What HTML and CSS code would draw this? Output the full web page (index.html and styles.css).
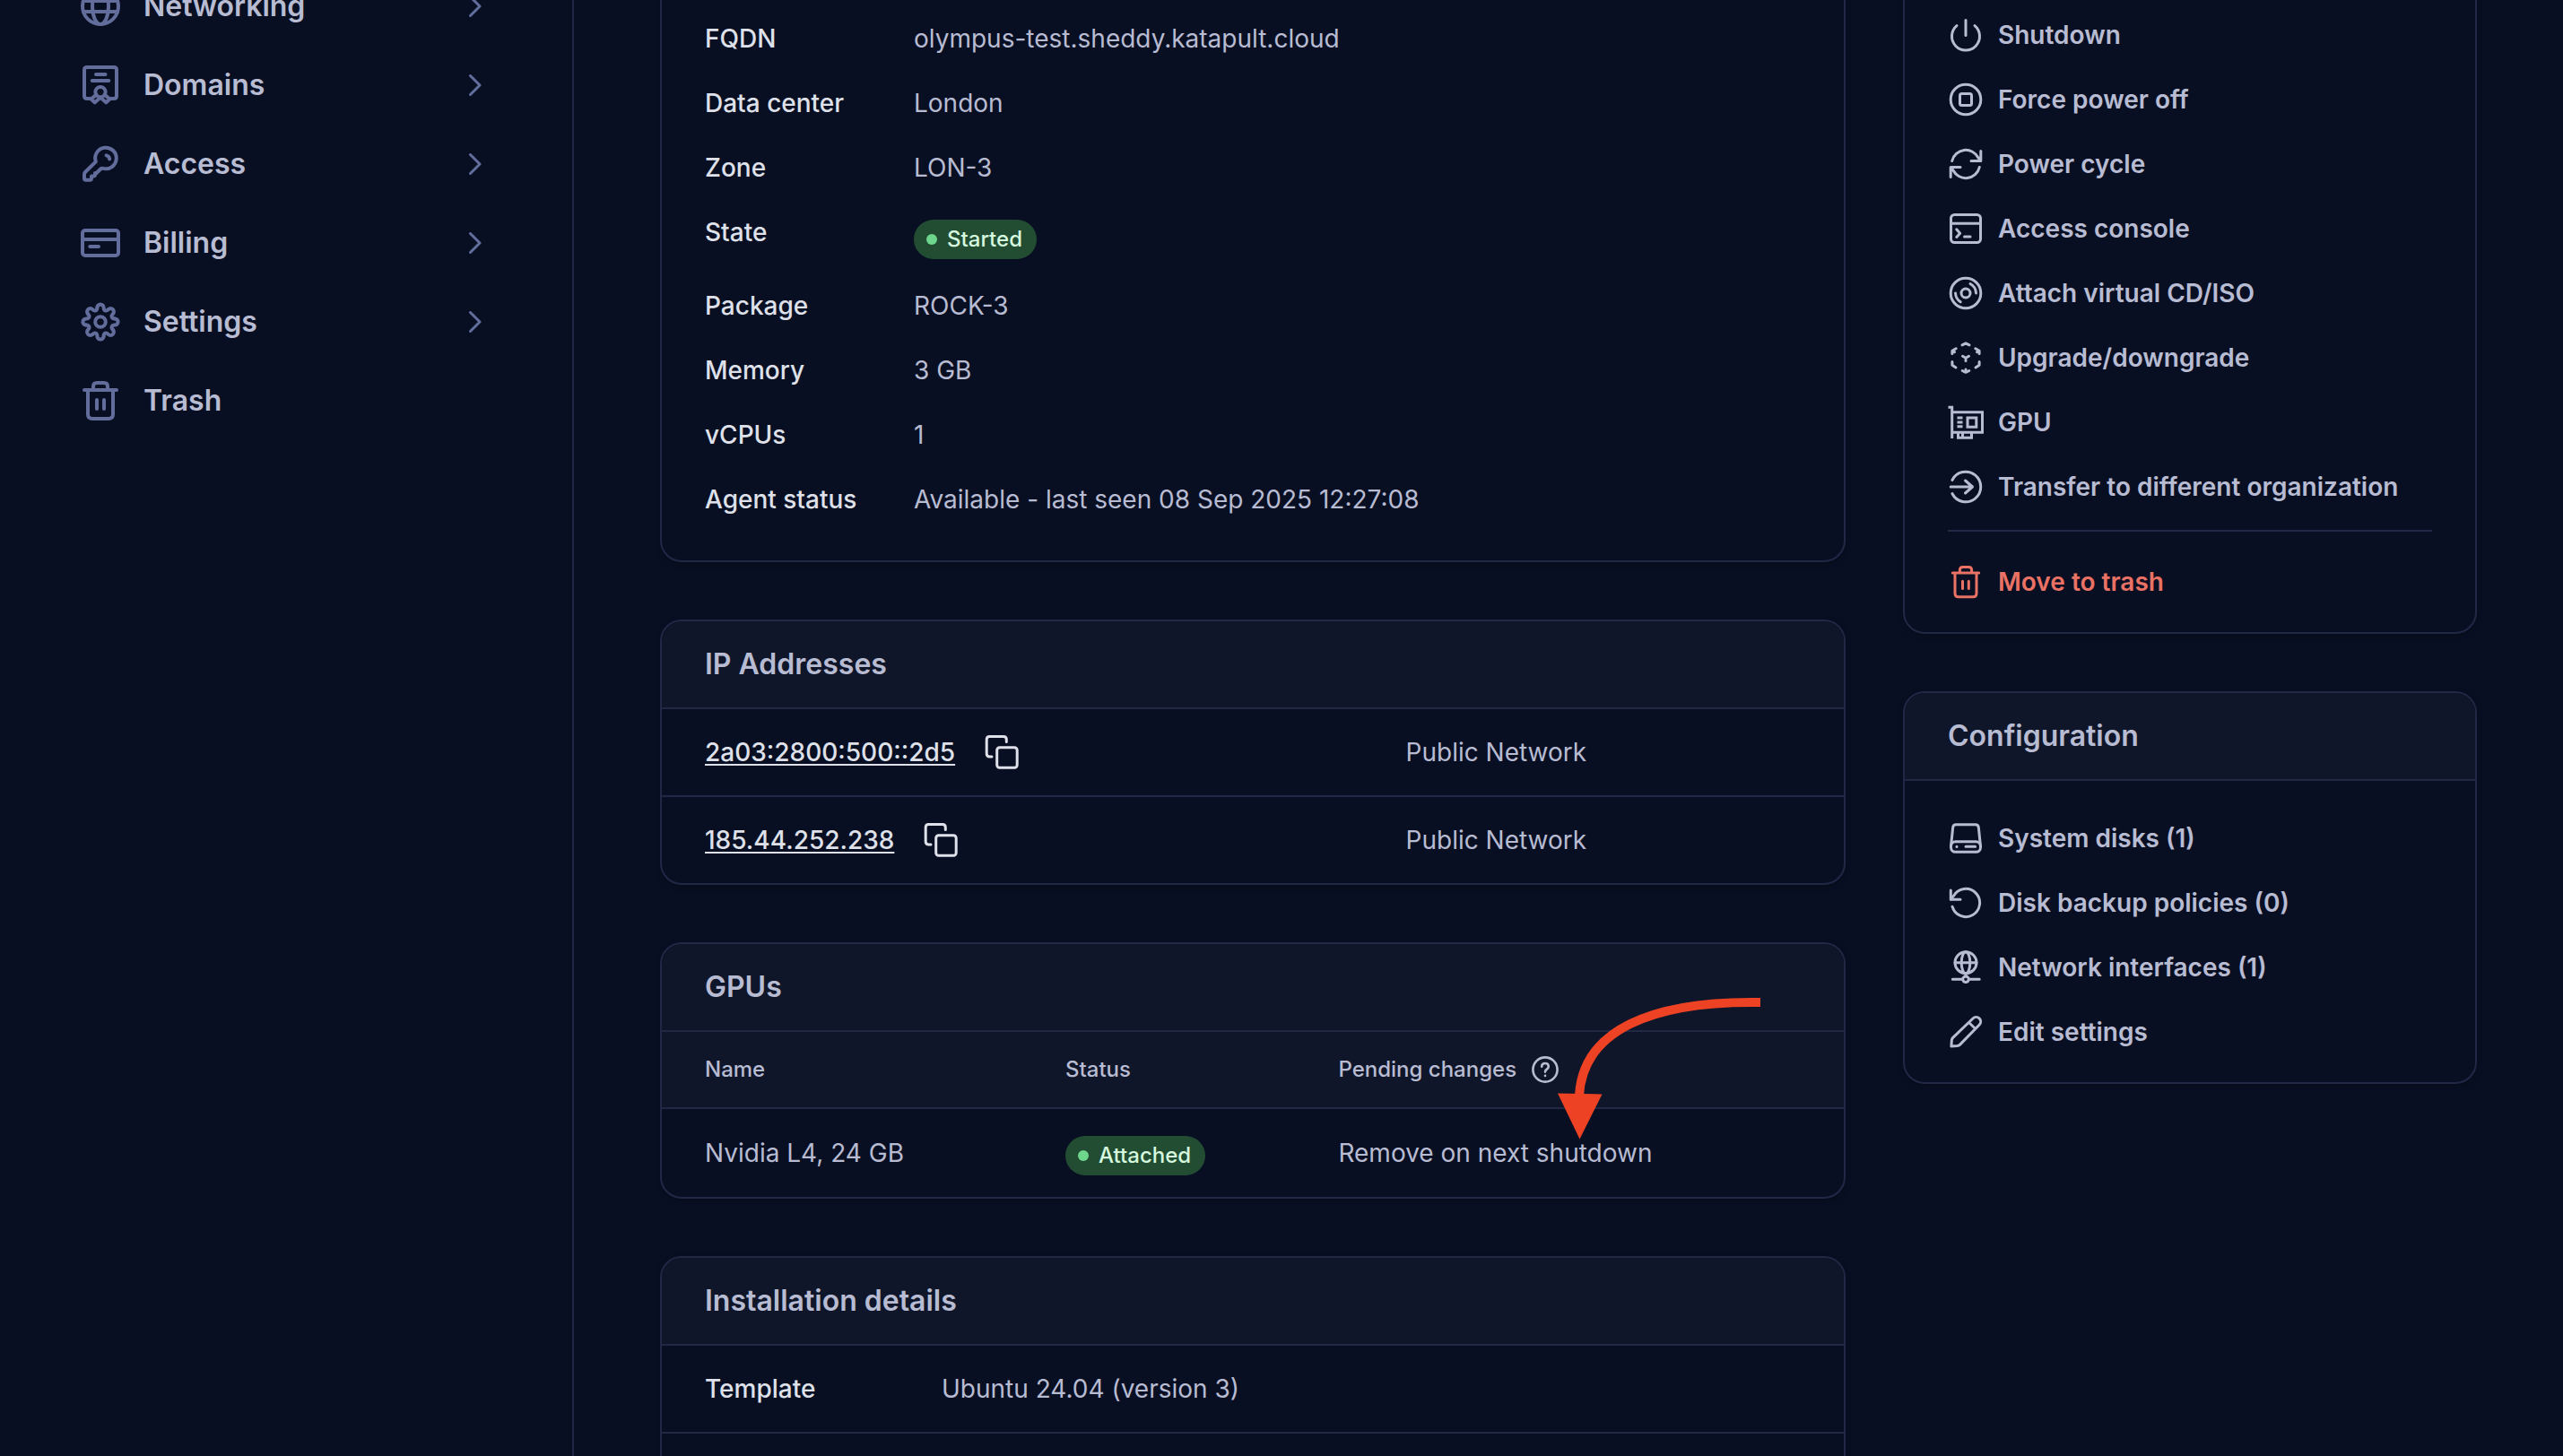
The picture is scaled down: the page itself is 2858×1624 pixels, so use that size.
FILE: index.html
```html
<!DOCTYPE html>
<html lang="en">
<head>
<meta charset="utf-8">
<meta name="viewport" content="width=device-width, initial-scale=1">
<title>Virtual machine</title>
<link rel="stylesheet" href="styles.css">
</head>
<body>
<svg class="sprite" aria-hidden="true">
  <symbol id="chevron" viewBox="0 0 16 24"><path d="M2.5 1.5 13 12 2.5 22.5"/></symbol>
  <symbol id="copy" viewBox="0 0 40 40"><path d="M9 25H6.5Q3.2 25 3.2 21.8V5.8Q3.2 2.6 6.4 2.6H22Q25.3 2.6 25.3 5.8V8.5"/><rect x="14.7" y="14.7" width="22.5" height="22.5" rx="3"/></symbol>
  <symbol id="tooth" viewBox="0 0 48 48" overflow="visible"><path d="M20.4 8A3.6 3.6 0 0 1 27.6 8C27.6 11.5 30.3 12.6 32.77 10.14"/></symbol>
</svg>
<div class="page">
  <nav class="sidebar" aria-label="Main">
    <a class="nav-item" href="#networking">
      <svg class="nav-icon" viewBox="0 0 48 48"><circle cx="24" cy="24" r="20"/><ellipse cx="24" cy="24" rx="9" ry="20"/><path d="M5 18H43M5 30H43"/></svg>
      <span>Networking</span><svg class="chevron"><use href="#chevron"/></svg>
    </a>
    <a class="nav-item" href="#domains">
      <svg class="nav-icon" viewBox="0 0 48 48"><path d="M13 39H9Q6 39 6 36V7Q6 4 9 4H39Q42 4 42 7V36Q42 39 39 39H35M19 12H29.5M14.7 19H33.3M19.5 34.5 13.6 39.5 17.7 43.3 24 37.8 30.3 43.3 34.4 39.5 28.5 34.5"/><circle cx="24" cy="31.7" r="5.6"/></svg>
      <span>Domains</span><svg class="chevron"><use href="#chevron"/></svg>
    </a>
    <a class="nav-item" href="#access">
      <svg class="nav-icon" viewBox="0 0 48 48"><path d="M18.8 21.3 7 33Q6 34 6 35.4V39.8Q6 41.7 7.9 41.7H12.3Q14 41.7 14 40V37.6H16.2Q18 37.6 18 35.8V34H19.6L24.4 29.3Q25.5 28.3 27 28.9A11.8 11.8 0 1 0 18.8 21.3M30.6 14.4Q33.6 15 34.2 18.4"/></svg>
      <span>Access</span><svg class="chevron"><use href="#chevron"/></svg>
    </a>
    <a class="nav-item" href="#billing">
      <svg class="nav-icon" viewBox="0 0 48 48"><rect x="4" y="10" width="40" height="28" rx="3"/><path d="M4 20H44M12.3 28H22"/></svg>
      <span>Billing</span><svg class="chevron"><use href="#chevron"/></svg>
    </a>
    <a class="nav-item" href="#settings">
      <svg class="nav-icon" viewBox="0 0 48 48"><circle cx="24" cy="24" r="5.8"/><use href="#tooth" width="48" height="48"/><use href="#tooth" width="48" height="48" transform="rotate(45 24 24)"/><use href="#tooth" width="48" height="48" transform="rotate(90 24 24)"/><use href="#tooth" width="48" height="48" transform="rotate(135 24 24)"/><use href="#tooth" width="48" height="48" transform="rotate(180 24 24)"/><use href="#tooth" width="48" height="48" transform="rotate(225 24 24)"/><use href="#tooth" width="48" height="48" transform="rotate(270 24 24)"/><use href="#tooth" width="48" height="48" transform="rotate(315 24 24)"/></svg>
      <span>Settings</span><svg class="chevron"><use href="#chevron"/></svg>
    </a>
    <a class="nav-item" href="#trash">
      <svg class="nav-icon" viewBox="0 0 48 48"><path d="M6 12H42M16 12V8Q16 4 20 4H28Q32 4 32 8V12M10 12V39Q10 44 15 44H33Q38 44 38 39V12M20 23V33M28 23V33"/></svg>
      <span>Trash</span>
    </a>
  </nav>

  <main class="content">
    <div class="column">
      <section class="card" aria-label="Details">
        <dl class="details">
          <dt>FQDN</dt><dd>olympus-test.sheddy.katapult.cloud</dd>
          <dt>Data center</dt><dd>London</dd>
          <dt>Zone</dt><dd>LON-3</dd>
          <dt>State</dt><dd><span class="badge">Started</span></dd>
          <dt>Package</dt><dd>ROCK-3</dd>
          <dt>Memory</dt><dd>3 GB</dd>
          <dt>vCPUs</dt><dd>1</dd>
          <dt>Agent status</dt><dd>Available - last seen 08 Sep 2025 12:27:08</dd>
        </dl>
      </section>

      <section class="card">
        <h2 class="card-title">IP Addresses</h2>
        <table class="table ip-table">
          <tbody>
            <tr>
              <td><div class="address"><a href="#ipv6">2a03:2800:500::2d5</a><button class="icon-button" type="button" aria-label="Copy"><svg class="icon"><use href="#copy"/></svg></button></div></td>
              <td>Public Network</td>
            </tr>
            <tr>
              <td><div class="address"><a href="#ipv4">185.44.252.238</a><button class="icon-button" type="button" aria-label="Copy"><svg class="icon"><use href="#copy"/></svg></button></div></td>
              <td>Public Network</td>
            </tr>
          </tbody>
        </table>
      </section>

      <section class="card">
        <h2 class="card-title">GPUs</h2>
        <table class="table gpu-table">
          <thead>
            <tr>
              <th scope="col">Name</th>
              <th scope="col">Status</th>
              <th scope="col"><div class="heading-help">Pending changes<button class="icon-button" type="button" aria-label="Help"><svg class="help-icon" viewBox="0 0 32 32"><circle cx="16" cy="16" r="13.6"/><path d="M12.2 12.8Q12.2 9 16 9Q19.8 9 19.8 12.4Q19.8 14.2 17.8 15.6Q16 16.8 16 18.6"/><path d="M16 22.8V22.9"/></svg></button></div></th>
            </tr>
          </thead>
          <tbody>
            <tr>
              <td>Nvidia L4, 24 GB</td>
              <td><span class="badge">Attached</span></td>
              <td>Remove on next shutdown</td>
            </tr>
          </tbody>
        </table>
        <svg class="arrow" viewBox="0 0 226 160" aria-hidden="true"><path class="arrow-line" d="M226 6C103 4 28 38 24 110"/><path class="arrow-head" d="M0 107.500 49.500 108.500 24.500 158.500Z"/></svg>
      </section>

      <section class="card">
        <h2 class="card-title">Installation details</h2>
        <table class="table install-table">
          <tbody>
            <tr><th scope="row">Template</th><td>Ubuntu 24.04 (version 3)</td></tr>
            <tr><th scope="row"></th><td></td></tr>
          </tbody>
        </table>
      </section>
    </div>

    <aside class="column">
      <section class="card" aria-label="Actions">
        <ul class="actions">
          <li><a href="#shutdown"><svg class="icon" viewBox="0 0 40 40"><path d="M20 3.500V20.500M10 9.700A15.500 15.500 0 1 0 30 9.700"/></svg>Shutdown</a></li>
          <li><a href="#force"><svg class="icon" viewBox="0 0 40 40"><circle cx="20" cy="20" r="16.800"/><rect x="13.500" y="13.500" width="13" height="13" rx="2"/></svg>Force power off</a></li>
          <li><a href="#cycle"><svg class="icon" viewBox="0 0 40 40"><path d="M4.700 16.500A15.700 15.700 0 0 1 34 13L36.500 16.500M36.800 5.500V16.500H26M35.300 23.500A15.700 15.700 0 0 1 6 27L3.500 23.500M3.200 34.500V23.500H14"/></svg>Power cycle</a></li>
          <li><a href="#console"><svg class="icon" viewBox="0 0 40 40"><rect x="3.500" y="4.500" width="33" height="31" rx="4"/><path d="M3.500 14.300H36.500M9.800 20.800 13.600 25.200 9.800 29.500M18.500 29H25"/></svg>Access console</a></li>
          <li><a href="#iso"><svg class="icon" viewBox="0 0 40 40"><circle cx="20" cy="20" r="16.800"/><circle cx="20" cy="20" r="5"/><path d="M25 9.500A12.500 12.500 0 0 1 31.500 20M8.500 20A12.500 12.500 0 0 0 14.200 29.800"/></svg>Attach virtual CD/ISO</a></li>
          <li><a href="#upgrade"><svg class="icon" viewBox="0 0 40 40"><path d="M16 5.800 20 3.900 24 5.800M9.200 9.800 4.900 12.200V15.500M4.900 12.200 7.500 13.600M30.800 9.800 35.100 12.200V15.500M35.100 12.200 32.500 13.600M4.900 24.500V28.300L9 31M35.100 24.500V28.300L31 31M16.200 34.500 20 36.300 23.800 34.500M20 36.300V33M16.500 18.200 20 20.200 23.500 18.200M20 20.200V23.500"/></svg>Upgrade/downgrade</a></li>
          <li><a href="#gpu"><svg class="icon icon-square" viewBox="0 0 40 40"><path d="M.5 3.200H4.700V38M4.700 8.800H38.500V31.200H4.700M22 15H31.800V25.200H22ZM10.500 15H16.500M10.500 20H16.500M10.500 24.800H16.500M11.500 31.200V37.300H26.500V31.200M16.500 31.200V37"/></svg>GPU</a></li>
          <li><a href="#transfer"><svg class="icon" viewBox="0 0 40 40"><path d="M4.900 12.500A16.800 16.800 0 1 1 4.900 27.500M3.200 20H27.500M19.500 13 27.500 20 19.500 27"/></svg>Transfer to different organization</a></li>
          <li class="danger"><a href="#move-to-trash"><svg class="icon" viewBox="0 0 40 40"><path d="M5.300 10H34.700M13.400 10V6.600Q13.400 3.400 16.600 3.400H23.400Q26.600 3.400 26.600 6.600V10M8 10V32.700Q8 36.700 12 36.700H28Q32 36.700 32 32.700V10M16.500 19.200V27.500M23.300 19.200V27.500"/></svg>Move to trash</a></li>
        </ul>
      </section>

      <section class="card">
        <h2 class="card-title">Configuration</h2>
        <ul class="actions">
          <li><a href="#disks"><svg class="icon" viewBox="0 0 40 40"><rect x="3.500" y="23.700" width="33" height="11.600" rx="5"/><path d="M3.600 28 5.700 7.700Q6.100 4.700 9.200 4.700H30.800Q33.900 4.700 34.300 7.700L36.400 28M10 29.300V29.400M20 29.300H30.600"/></svg>System disks (1)</a></li>
          <li><a href="#backups"><svg class="icon" viewBox="0 0 40 40"><path d="M3.300 6V16.300H14M3.300 16.300 6.500 12.200A15.600 15.600 0 1 1 5 24.200"/></svg>Disk backup policies (0)</a></li>
          <li><a href="#interfaces"><svg class="icon" viewBox="0 0 40 40"><circle cx="20" cy="14.700" r="12"/><ellipse cx="20" cy="14.700" rx="4.800" ry="12"/><path d="M8 14.700H32M20 27V30M5.300 33.300H16.500M23.500 33.300H35.200"/><circle cx="20" cy="33.300" r="3.300"/></svg>Network interfaces (1)</a></li>
          <li><a href="#edit"><svg class="icon" viewBox="0 0 40 40"><path d="M3.900 36.100 4.300 29.500Q4.400 27.700 5.700 26.400L28 5A5 5 0 0 1 35.200 12L13.600 34.100Q12.300 35.400 10.500 35.600ZM23.500 9.500 30.800 16.500"/></svg>Edit settings</a></li>
        </ul>
      </section>
    </aside>
  </main>
</div>
</body>
</html>
```
FILE: styles.css
```css
:root {
  --bg: #090f23;
  --raised: #101629;
  --line: #202846;
  --text: #b8bcd2;
  --strong: #dfe1ea;
  --muted: #626d9b;
}

* {
  box-sizing: border-box;
}

body {
  margin: 0;
  background: var(--bg);
  color: var(--text);
  font: 400 28px/40px Inter, "Liberation Sans", sans-serif;
}

a {
  color: inherit;
}

svg {
  display: block;
  flex: none;
  fill: none;
  stroke: currentColor;
  stroke-linecap: round;
  stroke-linejoin: round;
}

.sprite {
  position: absolute;
  width: 0;
  height: 0;
}

.page {
  display: flex;
  height: 100vh;
  overflow: hidden;
}

/* Sidebar */

.sidebar {
  flex: 0 0 640px;
  border-right: 2px solid var(--line);
  padding: 0 100px 0 88px;
}

.nav-item:first-child {
  margin-top: -37px;
}

.nav-item {
  display: flex;
  align-items: center;
  gap: 24px;
  height: 88px;
  font-size: 32px;
  font-weight: 600;
  text-decoration: none;
}

.nav-icon {
  width: 48px;
  height: 48px;
  color: var(--muted);
  stroke-width: 4;
}

.chevron {
  width: 16px;
  height: 24px;
  margin-left: auto;
  color: var(--muted);
  stroke-width: 3;
}

/* Content */

.content {
  flex: 1;
  min-width: 0;
  display: grid;
  grid-template-columns: minmax(0, 1fr) 640px;
  align-items: start;
  gap: 64px;
  padding: 0 96px;
  margin-top: -27px;
}

.column {
  display: grid;
  gap: 64px;
}

.card {
  position: relative;
  overflow: hidden;
  border: 2px solid var(--line);
  border-radius: 24px;
  box-shadow: 0 2px 6px rgba(0, 0, 0, 0.3);
}

.card-title {
  margin: 0;
  padding: 28px 48px;
  border-bottom: 2px solid var(--line);
  background: var(--raised);
  font-size: 32px;
  font-weight: 600;
}

.details {
  display: grid;
  grid-template-columns: 233px 1fr;
  margin: 0;
  padding: 32px 48px;
}

.details dt,
.details dd {
  margin: 0;
  padding: 16px 0;
}

.details dt {
  color: var(--strong);
  font-weight: 500;
}

.badge {
  display: flex;
  align-items: center;
  gap: 11px;
  width: fit-content;
  height: 44px;
  margin-top: 6px;
  padding: 0 16px 0 14px;
  border-radius: 22px;
  background: #224d32;
  color: #d5f8de;
  font-size: 24px;
  font-weight: 500;
}

.badge::before {
  content: "";
  width: 12px;
  height: 12px;
  border-radius: 50%;
  background: #6dd58c;
}

/* Tables */

.table {
  width: 100%;
  table-layout: fixed;
  border-spacing: 0;
}

.table th,
.table td {
  height: 96px;
  padding: 0 0 0 48px;
  text-align: left;
  vertical-align: middle;
}

.table tr + tr > *,
.table thead + tbody td {
  height: 98px;
  border-top: 2px solid var(--line);
}

.ip-table td:first-child {
  width: 59.3%;
}

.address {
  display: flex;
  align-items: center;
  gap: 32px;
}

.address a {
  color: var(--strong);
  font-weight: 500;
  text-decoration-thickness: 2px;
  text-underline-offset: 3px;
}

.icon-button {
  display: block;
  padding: 0;
  border: 0;
  background: none;
  color: inherit;
}

.address .icon-button {
  color: var(--strong);
}

.gpu-table thead th {
  height: 84px;
  background: var(--raised);
  font-size: 24px;
  font-weight: 500;
}

.gpu-table thead + tbody td {
  height: 100px;
}

.gpu-table th:nth-child(1) {
  width: 30.5%;
}

.gpu-table th:nth-child(2) {
  width: 23.1%;
}

.heading-help {
  display: flex;
  align-items: center;
  gap: 16px;
}

.help-icon {
  width: 32px;
  height: 32px;
  stroke-width: 2.6;
}

.install-table th {
  width: 264px;
  color: var(--strong);
  font-weight: 500;
}

.arrow {
  position: absolute;
  top: 59px;
  right: 93px;
  width: 226px;
  height: 160px;
}

.arrow-line {
  stroke: #ed4224;
  stroke-width: 10;
  stroke-linecap: butt;
}

.arrow-head {
  fill: #ed4224;
  stroke: none;
}

/* Action lists */

.icon {
  width: 40px;
  height: 40px;
  stroke-width: 3;
}

.icon-square {
  stroke-linecap: butt;
  stroke-linejoin: miter;
}

.actions {
  margin: 0;
  padding: 28px 48px 20px;
  list-style: none;
}

.actions a {
  display: flex;
  align-items: center;
  gap: 16px;
  height: 72px;
  font-weight: 600;
  text-decoration: none;
}

.actions .danger {
  margin-top: 12px;
  padding-top: 20px;
  border-top: 2px solid var(--line);
  color: #ea7264;
}
```
